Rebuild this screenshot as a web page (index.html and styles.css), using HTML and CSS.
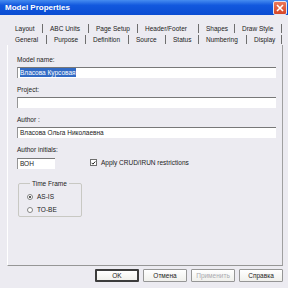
FILE: index.html
```html
<!DOCTYPE html>
<html lang="ru">
<head>
    <meta charset="UTF-8">
    <title>Model Properties</title>
    <link rel="stylesheet" href="styles.css">
</head>
<body>
    <div class="window">
        <!-- заголовок окна -->
        <div class="titlebar">
            <span class="title">Model Properties</span>
            <span class="close">
                <svg width="8" height="8" viewBox="0 0 8 8"><path d="M1 1L7 7M7 1L1 7" stroke="#fff" stroke-width="1.6"/></svg>
            </span>
        </div>

        <div class="tabs">
            <div class="tab-row row-top">
                <span class="tab">Layout</span>
                <span class="tab">ABC Units</span>
                <span class="tab">Page Setup</span>
                <span class="tab">Header/Footer</span>
                <span class="tab">Shapes</span>
                <span class="tab">Draw Style</span>
            </div>
            <div class="tab-row row-bottom">
                <span class="tab active">General</span>
                <span class="tab">Purpose</span>
                <span class="tab">Definition</span>
                <span class="tab">Source</span>
                <span class="tab">Status</span>
                <span class="tab">Numbering</span>
                <span class="tab">Display</span>
            </div>
        </div>

        <div class="panel">
            <div class="field">
                <label>Model name:</label>
                <div class="input"><span class="selected">Власова Курсовая</span></div>
            </div>
            <div class="field">
                <label>Project:</label>
                <div class="input"></div>
            </div>
            <div class="field">
                <label>Author :</label>
                <div class="input">Власова Ольга Николаевна</div>
            </div>
            <div class="initials-row">
                <div class="initials">
                    <label>Author initials:</label>
                    <div class="input short">ВОН</div>
                </div>
                <div class="check">
                    <span class="box">
                        <svg width="6" height="6" viewBox="0 0 6 6"><path d="M0.8 2.8L2.3 4.4L5.2 1.2" fill="none" stroke="#222" stroke-width="1.2"/></svg>
                    </span>
                    Apply CRUD/IRUN restrictions
                </div>
            </div>
            <fieldset class="group">
                <legend>Time Frame</legend>
                <div class="radio"><span class="dot on"></span>AS-IS</div>
                <div class="radio"><span class="dot"></span>TO-BE</div>
            </fieldset>
        </div>

        <div class="buttons">
            <div class="btn default">OK</div>
            <div class="btn">Отмена</div>
            <div class="btn disabled">Применить</div>
            <div class="btn">Справка</div>
        </div>
    </div>
</body>
</html>
```

FILE: styles.css
```css
*{
    padding: 0;
    margin: 0;
    box-sizing: border-box;
}
body{
    width: 288px;
    height: 288px;
    overflow: hidden;
    background-color: rgb(236, 235, 241);
    font-family: "Liberation Sans", Arial, sans-serif;
    font-size: 6.5px;
    color: rgb(34, 34, 34);
}
.titlebar{
    height: 15px;
    display: flex;
    justify-content: space-between;
    align-items: center;
    padding: 0 1px 0 5px;
    background: linear-gradient(rgb(70, 140, 240), rgb(18, 88, 222) 35%, rgb(10, 76, 210));
}
.title{
    color: #fff;
    font-size: 8px;
    font-weight: bold;
}
.close{
    width: 14px;
    height: 14px;
    display: flex;
    justify-content: center;
    align-items: center;
    border: 1px solid rgb(230, 230, 240);
    border-radius: 2px;
    background: linear-gradient(rgb(236, 120, 90), rgb(214, 70, 40));
}
.tabs{
    padding-top: 8px;
}
.tab-row{
    display: grid;
    height: 11px;
    align-items: center;
    padding-left: 8px;
}
.row-top{
    grid-template-columns: 35px 46px 49px 61px 36px 47px;
}
.row-bottom{
    grid-template-columns: 39px 39px 43px 37px 33px 48px 35px;
}
.tab{
    height: 9px;
    line-height: 9px;
    padding-left: 7px;
    border-right: 1px solid rgb(110, 110, 110);
    white-space: nowrap;
}
.panel{
    width: 276px;
    height: 221px;
    margin-left: 7px;
    padding: 10px 6px 0 9px;
    border-left: 1px solid #fff;
    border-right: 1px solid rgb(160, 160, 160);
    border-bottom: 1px solid rgb(150, 150, 150);
}
label{
    display: block;
    line-height: 10px;
    white-space: nowrap;
}
.field{
    margin-bottom: 7px;
}
.input{
    height: 11px;
    margin-top: 2px;
    padding: 0 2px;
    line-height: 10px;
    background-color: #fff;
    border-top: 1px solid rgb(120, 120, 120);
    border-left: 1px solid rgb(150, 150, 150);
    white-space: nowrap;
}
.selected{
    display: inline-block;
    height: 9px;
    line-height: 9px;
    background-color: rgb(49, 106, 197);
    color: #fff;
}
.initials-row{
    display: flex;
    align-items: flex-end;
}
.initials{
    width: 38px;
}
.short{
    margin-top: 3px;
}
.check{
    display: flex;
    align-items: center;
    gap: 4px;
    height: 11px;
    margin-left: 35px;
    margin-bottom: 1px;
}
.box{
    width: 7px;
    height: 7px;
    display: flex;
    justify-content: center;
    align-items: center;
    background-color: #fff;
    border: 1px solid rgb(110, 110, 110);
}
.group{
    width: 64px;
    height: 38px;
    margin: 10px 0 0 1px;
    padding: 2px 0 0 8px;
    border: 1px solid rgb(200, 200, 195);
    border-radius: 2px;
}
.group legend{
    margin-left: 3px;
    padding: 0 2px;
    line-height: 9px;
}
.radio{
    display: flex;
    align-items: center;
    gap: 4px;
    height: 13px;
}
.dot{
    width: 6px;
    height: 6px;
    display: flex;
    justify-content: center;
    align-items: center;
    border-radius: 50%;
    background-color: #fff;
    border: 1px solid rgb(130, 130, 130);
}
.dot.on::after{
    content: '';
    width: 2px;
    height: 2px;
    border-radius: 50%;
    background-color: #222;
}
.buttons{
    display: flex;
    justify-content: flex-end;
    gap: 4px;
    margin-top: 3px;
    padding-right: 5px;
}
.btn{
    width: 44px;
    height: 13px;
    line-height: 11px;
    text-align: center;
    background: linear-gradient(#fff, rgb(240, 240, 236));
    border: 1px solid rgb(150, 150, 150);
    border-radius: 1px;
}
.btn.default{
    border: 2px solid rgb(60, 60, 60);
    line-height: 9px;
}
.btn.disabled{
    color: rgb(170, 170, 175);
}
```
